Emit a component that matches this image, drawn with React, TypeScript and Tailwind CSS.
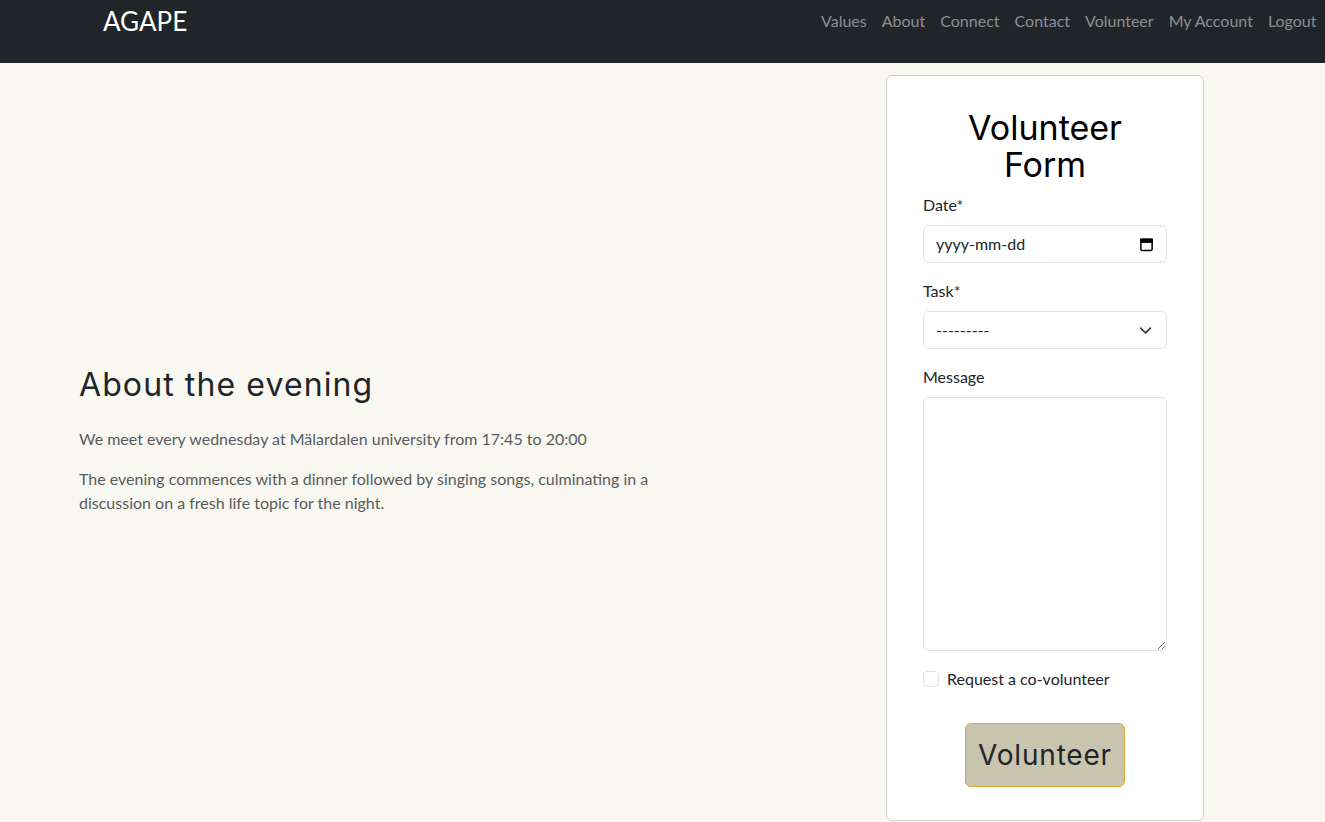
import React from 'react';

const navLinks = ['Values', 'About', 'Connect', 'Contact', 'Volunteer', 'My Account', 'Logout'];

const bodyFont = "font-['Lato','Open_Sans',sans-serif]";
const headFont = "font-['Inter','Open_Sans',sans-serif]";

const CalendarIcon = () => (
  <svg width="15" height="15" viewBox="0 0 16 16" fill="none" stroke="#000" strokeWidth="1.6">
    <rect x="2" y="2.5" width="12" height="12" rx="1.5" />
    <rect x="2" y="2.5" width="12" height="3" fill="#000" />
  </svg>
);

const ChevronDown = () => (
  <svg width="13" height="13" viewBox="0 0 16 16" fill="none" stroke="#343a40" strokeWidth="2" strokeLinecap="round" strokeLinejoin="round">
    <path d="M2 5l6 6 6-6" />
  </svg>
);

const Navbar = () => (
  <nav className="h-[63px] bg-[#212529]">
    <div className="flex h-[42px] items-center pl-[103px]">
      <span className={`${bodyFont} text-[26px] leading-none text-white`}>AGAPE</span>
      <ul className="ml-auto flex items-center pr-[1px]">
        {navLinks.map((link) => (
          <li key={link}>
            <a href="#" className={`${bodyFont} block px-[7.5px] text-[16px] text-[#8c8f92]`}>
              {link}
            </a>
          </li>
        ))}
      </ul>
    </div>
  </nav>
);

const VolunteerForm = () => (
  <form className="w-[318px] shrink-0 rounded-[6px] border border-[#cfcec8] bg-white px-[36px] pt-[33px] pb-[33px]">
    <h2 className={`${headFont} mb-[10px] text-center text-[34px] font-normal leading-[37px] text-black`}>
      Volunteer
      <br />
      Form
    </h2>

    <label className={`${bodyFont} mb-2 block text-[16px] leading-6 text-[#212529]`}>Date*</label>
    <div className="mb-4 flex h-[38px] items-center justify-between rounded-[6px] border border-[#dee2e6] px-3">
      <span className={`${bodyFont} text-[16px] text-[#212529]`}>yyyy-mm-dd</span>
      <CalendarIcon />
    </div>

    <label className={`${bodyFont} mb-2 block text-[16px] leading-6 text-[#212529]`}>Task*</label>
    <div className="mb-4 flex h-[38px] items-center justify-between rounded-[6px] border border-[#dee2e6] pl-3 pr-[14px]">
      <span className={`${bodyFont} text-[16px] text-[#212529]`}>---------</span>
      <ChevronDown />
    </div>

    <label className={`${bodyFont} mb-2 block text-[16px] leading-6 text-[#212529]`}>Message</label>
    <textarea className="mb-4 block h-[254px] w-full rounded-[6px] border border-[#dee2e6] px-3 py-1.5 outline-none" />

    <label className={`${bodyFont} flex items-center gap-[8px] text-[16px] leading-6 text-[#212529]`}>
      <input type="checkbox" className="h-4 w-4 appearance-none rounded-[4px] border border-[#dee2e6] bg-white" />
      Request a co-volunteer
    </label>

    <div className="mt-[32px] flex justify-center">
      <button
        type="button"
        className={`${headFont} h-[64px] w-[160px] rounded-[6px] border border-[#e0a43c] bg-[#c8c4ae] text-[28px] tracking-[0.8px] text-[#212529]`}
      >
        Volunteer
      </button>
    </div>
  </form>
);

export default function App() {
  return (
    <div className="min-h-screen bg-[#f8f7f0]">
      <Navbar />
      <main className="flex pt-[12px] pl-[79px] pr-[121px]">
        <section className="flex flex-1 items-center">
          <div className="w-[620px]">
            <h1 className={`${headFont} mb-[23px] text-[32px] font-normal leading-[38px] tracking-[1.1px] text-[#212529]`}>
              About the evening
            </h1>
            <p className={`${bodyFont} mb-4 text-[16px] leading-6 text-[#595c5f]`}>
              We meet every wednesday at Mälardalen university from 17:45 to 20:00
            </p>
            <p className={`${bodyFont} mb-4 text-[16px] leading-6 text-[#595c5f]`}>
              The evening commences with a dinner followed by singing songs, culminating in a discussion on a fresh
              life topic for the night.
            </p>
          </div>
        </section>
        <VolunteerForm />
      </main>
    </div>
  );
}
